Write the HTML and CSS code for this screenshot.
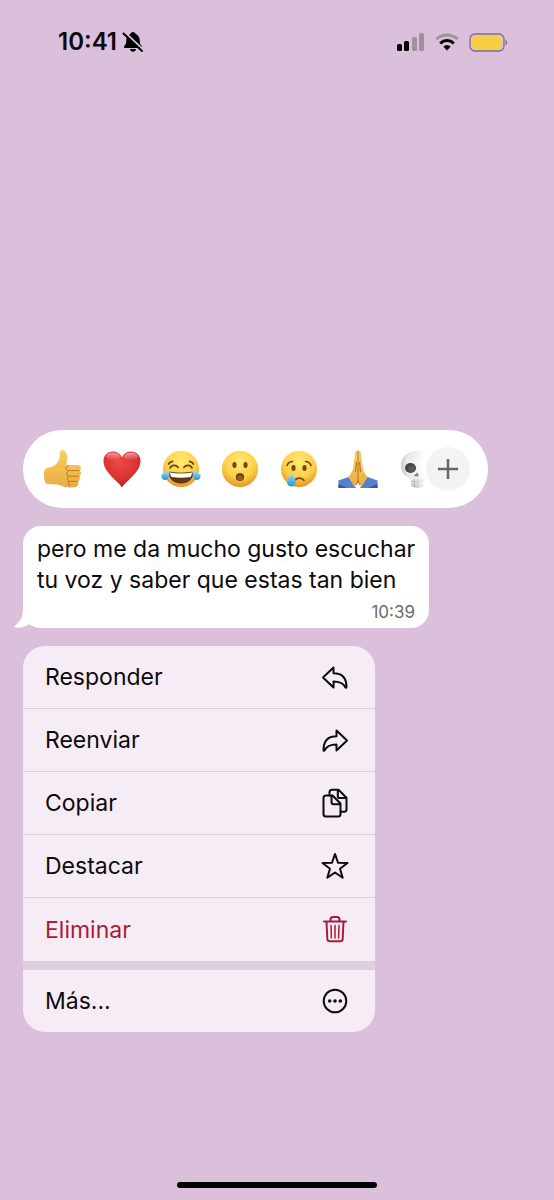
FILE: index.html
```html
<!DOCTYPE html>
<html lang="es">
<head>
  <meta charset="UTF-8">
  <meta name="viewport" content="width=device-width, initial-scale=1.0">
  <title>Chat</title>
  <link rel="stylesheet" href="styles.css">
</head>
<body>
  <header class="status-bar">
    <div class="clock">
      <span>10:41</span>
      <svg width="22" height="22" viewBox="0 0 22 22">
        <path d="M11 1c-1.600 0-2.400 1-2.600 2.100C5.500 4 4.300 6.500 4.300 9.500c0 3-.8 4.300-2 5.500-.7.800-.4 2 .7 2h16c1.100 0 1.400-1.200.7-2-1.200-1.200-2-2.500-2-5.500 0-3-1.200-5.500-4.100-6.400C13.400 2 12.600 1 11 1z"/>
        <path d="M8 18h6c-.2 1.700-1.300 2.700-3 2.700S8.200 19.700 8 18z"/>
        <path class="bell-gap" d="M2 .500l19 18"/>
        <path class="bell-slash" d="M1.500 2.500l18.500 17.500"/>
      </svg>
    </div>
    <div class="indicators">
      <svg width="29" height="18" viewBox="0 0 29 18">
        <rect x="1" y="11" width="5" height="7" rx="1.500"/>
        <rect x="8" y="8" width="5" height="10" rx="1.500"/>
        <g opacity=".25">
          <rect x="16" y="4" width="5" height="14" rx="1.500"/>
          <rect x="23" y="0" width="5" height="18" rx="1.500"/>
        </g>
      </svg>
      <svg width="24" height="18" viewBox="0 0 24 18">
        <path class="wifi-line" opacity=".25" d="M1.500 6.200C7.500.700 16.500.700 22.500 6.200"/>
        <path class="wifi-line" d="M5.200 10.300c4-3.700 9.600-3.700 13.600 0"/>
        <path d="M12 17.500l-3.600-3.800c2-1.900 5.200-1.900 7.200 0z"/>
      </svg>
      <svg width="40" height="19" viewBox="0 0 40 19">
        <rect x="1" y="1" width="34" height="17" rx="5" fill="none" stroke="#84698d" stroke-width="1.300"/>
        <rect x="3" y="3" width="30" height="13" rx="3.500" fill="#f6cf46"/>
        <path d="M36.500 6.500c2 .7 2 5.300 0 6z" fill="#84698d"/>
      </svg>
    </div>
  </header>

  <main class="overlay">
    <div class="reactions">
      <div class="reaction-list">
        <button class="reaction" aria-label="Me gusta">
          <svg viewBox="0 0 40 40">
            <defs>
              <linearGradient id="skin" x1="0" y1="0" x2="0" y2="1">
                <stop offset="0" stop-color="#fbcf62"/>
                <stop offset="1" stop-color="#e9ac42"/>
              </linearGradient>
              <radialGradient id="face" cx=".5" cy=".3" r=".72">
                <stop offset="0" stop-color="#ffec72"/>
                <stop offset=".6" stop-color="#fdcf49"/>
                <stop offset="1" stop-color="#e58f25"/>
              </radialGradient>
              <linearGradient id="tear" x1="0" y1="0" x2="0" y2="1">
                <stop offset="0" stop-color="#a8e6fb"/>
                <stop offset="1" stop-color="#2593d6"/>
              </linearGradient>
            </defs>
            <path fill="url(#skin)" d="M2 20c3-2 7-1.500 9.500-3.500 3-2.600 5.500-6 5.300-11.500-.1-2.500.7-4 2.400-4 3 0 5 3.500 5 7.500 0 3-.9 5.500-.7 7.500h11.500c3 0 4 4 1.600 5.600 2 1.500 1.800 4.600-.3 5.600 1.300 1.600.8 4.300-1.300 5.200 1 2.600-.6 5.600-3.600 5.900-5 .5-11-.1-15-2.300-4-1.500-9 .2-13.400-1.400C.500 30.500.500 22.500 2 20z"/>
            <path fill="none" stroke="#bd7a1e" stroke-width="1" stroke-linecap="round" d="M36 21.600H25.500M35.800 27.200H25.500M34.500 32.400H26M25.500 16.500c-2 .6-2.900 2.500-2 4.400M25.500 21.600c-2.200.9-2.400 4.200 0 5.600-1.700 1.300-1.500 4.200.5 5.200-1 1.500-.7 3.500.7 4.800"/>
            <path fill="none" stroke="#f0b13d" stroke-width="1" d="M13 18c4 0 7-3 8-6"/>
          </svg>
        </button>
        <button class="reaction" aria-label="Me encanta">
          <svg viewBox="0 0 40 40">
            <defs>
              <radialGradient id="heart" cx=".45" cy=".3" r=".75">
                <stop offset="0" stop-color="#ec4a43"/>
                <stop offset=".65" stop-color="#d9302f"/>
                <stop offset="1" stop-color="#ab1c20"/>
              </radialGradient>
              <linearGradient id="shine" x1="0" y1="0" x2="0" y2="1">
                <stop offset="0" stop-color="#fff" stop-opacity=".5"/>
                <stop offset="1" stop-color="#fff" stop-opacity="0"/>
              </linearGradient>
            </defs>
            <path fill="url(#heart)" d="M20 38.500C17 33 2 24 1.500 12.500 1.300 6.500 5.500 2.500 11 2.500c4.500 0 7.500 2.500 9 6 1.500-3.500 4.500-6 9-6 5.500 0 9.700 4 9.500 10C38 24 23 33 20 38.500z"/>
            <ellipse cx="11" cy="7.500" rx="7" ry="4" fill="url(#shine)"/>
            <ellipse cx="29" cy="7.500" rx="7" ry="4" fill="url(#shine)"/>
          </svg>
        </button>
        <button class="reaction" aria-label="Me divierte">
          <svg viewBox="0 0 40 40">
            <circle cx="20" cy="20" r="18" fill="url(#face)"/>
            <path fill="none" stroke="#6b3f10" stroke-width="1.700" stroke-linecap="round" d="M9 19c1.500-3.500 6-3.500 8.200-.6M22.800 18.400c2.200-2.900 6.700-2.900 8.200.6M7.500 15c1-1.500 2.500-2.400 4-2.700M32.500 15c-1-1.500-2.500-2.400-4-2.700"/>
            <path fill="#613613" d="M7.500 22.500c8 1.500 17 1.500 25 0C32.500 30.500 27 34.500 20 34.500S7.500 30.500 7.500 22.500z"/>
            <path fill="#fff" d="M9 23.500c7 1.200 15 1.200 22 0-.2 2-.8 3.500-1.500 4.500-6 .9-13 .9-19 0C9.800 27 9.200 25.500 9 23.500z"/>
            <path fill="url(#tear)" d="M9 21.500C8 26 8.500 30.800 4.500 31c-4 .2-5.500-4.500-2.500-6.500 2-1.300 5-1.500 7-3zM31 21.500c1 4.500.5 9.300 4.500 9.500 4 .2 5.500-4.500 2.500-6.500-2-1.300-5-1.500-7-3z"/>
          </svg>
        </button>
        <button class="reaction" aria-label="Me asombra">
          <svg viewBox="0 0 40 40">
            <circle cx="20" cy="20" r="18" fill="url(#face)"/>
            <ellipse cx="14.500" cy="16" rx="2.100" ry="3" fill="#754517"/>
            <ellipse cx="25.500" cy="16" rx="2.100" ry="3" fill="#754517"/>
            <ellipse cx="20" cy="28" rx="4.200" ry="4" fill="#754517"/>
            <ellipse cx="20" cy="29" rx="2.700" ry="2.200" fill="#936023"/>
          </svg>
        </button>
        <button class="reaction" aria-label="Me entristece">
          <svg viewBox="0 0 40 40">
            <circle cx="20" cy="20" r="18" fill="url(#face)"/>
            <ellipse cx="14.500" cy="19" rx="2.100" ry="3" fill="#754517"/>
            <ellipse cx="25.500" cy="19" rx="2.100" ry="3" fill="#754517"/>
            <path fill="none" stroke="#754517" stroke-width="1.600" stroke-linecap="round" d="M8 16.500c1-2.500 3-4 5.500-4M32 16.500c-1-2.500-3-4-5.500-4M16 31.500c1.500-3 7-3.300 9 0"/>
            <path fill="url(#tear)" d="M12.500 23.500c1.500 3.500 4.500 6.500 4.300 9.500-.2 3-2.300 4.600-4.600 4.600S8 35.800 8 33c0-3 3.200-5.500 4.500-9.500z"/>
          </svg>
        </button>
        <button class="reaction" aria-label="Gracias">
          <svg viewBox="0 0 40 40">
            <path fill="#5580cb" d="M.5 31.500l10-3.500 7.500 11H.5zM39.500 31.500l-10-3.500-7.500 11h17.500z"/>
            <path fill="#35589f" d="M.5 35l9 4H.5zM39.500 35l-9 4h9z"/>
            <path fill="url(#skin)" d="M19.800 1.500c-2 0-2.500.8-2.700 2.500l-1.600 13c-.6 5-2 7.500-5 10.500l5.500 10c2.800-1.200 4-4 4-7.500zM20.200 1.500c2 0 2.500.8 2.700 2.500l1.600 13c.6 5 2 7.500 5 10.500l-5.500 10c-2.800-1.200-4-4-4-7.500z"/>
            <path fill="none" stroke="#b8771f" stroke-width="1.100" d="M20 2v28c0 2.500-.8 4.500-2 6M20 30c0 2.500.8 4.500 2 6M18.500 13l-1 10M21.500 13l1 10"/>
          </svg>
        </button>
        <button class="reaction" aria-label="Calavera">
          <svg viewBox="0 0 40 40">
            <defs>
              <radialGradient id="bone" cx=".6" cy=".4" r=".7">
                <stop offset="0" stop-color="#fafafa"/>
                <stop offset=".65" stop-color="#e9ebed"/>
                <stop offset="1" stop-color="#a9b4b8"/>
              </radialGradient>
            </defs>
            <path fill="url(#bone)" d="M22 1.500C11 1.500 4 8 4 16.500c0 3.500 1 6 2.500 8.500 1.500 2.500 5.500 2.500 7 5 1 2 0 4.500 1 7 1.400 2.400 11 2.400 12.400 0 1-2.500 1.500-4.500 3.100-7 3-3 8-5 8-13.500C38 8 32 1.500 22 1.500z"/>
            <ellipse cx="13.500" cy="19" rx="5.500" ry="5" fill="#454547"/>
            <ellipse cx="14.500" cy="20" rx="3.500" ry="3" fill="#58585b"/>
            <path fill="#77797c" d="M20.500 23.500l-3.500 3.300c1.500.8 4 .8 5 0z"/>
            <path fill="none" stroke="#aeb0b2" stroke-width=".8" d="M14 32c4 1 9 1 13 0M17.500 30v8M21 30v8.500M24.500 30v8"/>
          </svg>
        </button>
      </div>
      <button class="more-reactions" aria-label="Más reacciones">
        <svg width="22" height="22" viewBox="0 0 22 22">
          <path d="M11 1v20M1 11h20"/>
        </svg>
      </button>
    </div>

    <div class="bubble">
      <svg class="tail" width="24" height="20" viewBox="0 0 24 20">
        <path d="M9 0c0 9-2.500 13.500-8.300 18-.6.600-.2 1.500.5 1.500C7 20 11 19 15 16.500L24 20V0z"/>
      </svg>
      <p>pero me da mucho gusto escuchar tu voz y saber que estas tan bien</p>
      <time datetime="10:39">10:39</time>
    </div>

    <div class="menu">
      <button class="menu-item">
        <span>Responder</span>
        <svg viewBox="0 0 32 32">
          <path d="M14.500 6.500L4 16.500l10.500 10v-6c6 0 9.800 1.200 12 6 .3.500 1 .4 1-.3 0-9-4-14-13-14z"/>
        </svg>
      </button>
      <button class="menu-item">
        <span>Reenviar</span>
        <svg viewBox="0 0 32 32">
          <path d="M17.500 6.500L28 16.500l-10.500 10v-6c-6 0-9.800 1.200-12 6-.3.500-1 .4-1-.3 0-9 4-14 13-14z"/>
        </svg>
      </button>
      <button class="menu-item">
        <span>Copiar</span>
        <svg viewBox="0 0 32 32">
          <path d="M7 8.500h6.500l8 8V27c0 1.700-.8 2.500-2.500 2.500H7c-1.700 0-2.500-.8-2.500-2.500V11c0-1.700.8-2.500 2.500-2.500zM12.500 8.500v6.500c0 1.500.7 2.200 2.200 2.200h6.800"/>
          <path d="M10.500 8.500V5.300c0-1.700.8-2.500 2.500-2.500h6.500l8 8v11.400c0 1.700-.8 2.500-2.500 2.500h-3.500M18.800 2.800v6.500c0 1.200.6 1.800 1.800 1.800h6.900"/>
        </svg>
      </button>
      <button class="menu-item">
        <span>Destacar</span>
        <svg viewBox="0 0 32 32">
          <path d="M16 4l3.100 8.800 9.400.2-7.500 5.700 2.700 9.100L16 22.500l-7.700 5.300 2.700-9.100L3.500 13l9.400-.2z"/>
        </svg>
      </button>
      <button class="menu-item danger">
        <span>Eliminar</span>
        <svg viewBox="0 0 32 32">
          <path d="M5 7.500h22M7.500 7.500l.8 17.500c.1 1.500.9 2.300 2.400 2.300h10.600c1.500 0 2.300-.8 2.400-2.300l.8-17.500M11.500 7.500v-2c0-1.600.9-2.500 2.500-2.500h4c1.600 0 2.500.9 2.500 2.500v2"/>
          <path class="thin" d="M12 11.500l.4 12.500M16 11.500V24M20 11.500L19.600 24"/>
        </svg>
      </button>
      <button class="menu-item">
        <span>Más...</span>
        <svg viewBox="0 0 32 32">
          <circle cx="16" cy="16" r="11.300"/>
          <g class="dots">
            <circle cx="10.700" cy="16" r="1.800"/>
            <circle cx="16" cy="16" r="1.800"/>
            <circle cx="21.300" cy="16" r="1.800"/>
          </g>
        </svg>
      </button>
    </div>
  </main>

  <div class="home-indicator"></div>
</body>
</html>
```
FILE: styles.css
```css
* {
  margin: 0;
  padding: 0;
  box-sizing: border-box;
}

body {
  display: flex;
  flex-direction: column;
  min-height: 100vh;
  font-family: Inter, "Liberation Sans", sans-serif;
  background-color: #dac0da;
  color: #0c0a0d;
}

button {
  border: none;
  background: none;
  font: inherit;
  color: inherit;
  cursor: pointer;
}

svg {
  display: block;
  flex-shrink: 0;
}

/* Status bar */
.status-bar {
  display: flex;
  justify-content: space-between;
  align-items: center;
  padding: 27px 45px 0 58px;
}

.clock {
  display: flex;
  align-items: center;
  gap: 5px;
  font-size: 24px;
  font-weight: 600;
  line-height: 30px;
}

.bell-gap {
  stroke: #dac0da;
  stroke-width: 2;
}

.bell-slash {
  stroke: #000;
  stroke-width: 2;
  stroke-linecap: round;
}

.indicators {
  display: flex;
  align-items: center;
  gap: 10px;
}

.wifi-line {
  fill: none;
  stroke: #000;
  stroke-width: 3;
}

/* Message and its context menu */
.overlay {
  flex: 1;
  display: flex;
  flex-direction: column;
  justify-content: flex-end;
  gap: 18px;
  padding: 0 23px 150px;
}

.reactions {
  display: flex;
  align-items: center;
  width: 100%;
  max-width: 465px;
  height: 78px;
  padding: 0 18px 0 20px;
  border-radius: 39px;
  background-color: #fff;
}

.reaction-list {
  flex: 1;
  display: flex;
  gap: 19px;
  min-width: 0;
  overflow: hidden;
  mask-image: linear-gradient(to left, transparent 0, #000 10px);
}

.reaction {
  flex: 0 0 40px;
  height: 40px;
}

.more-reactions {
  display: flex;
  flex-shrink: 0;
  align-items: center;
  justify-content: center;
  width: 44px;
  height: 44px;
  border-radius: 50%;
  background-color: #f3f3f3;
}

.more-reactions path {
  stroke: #656565;
  stroke-width: 2.5;
}

.bubble {
  position: relative;
  width: 100%;
  max-width: 406px;
  padding: 8px 8px 0 14px;
  border-radius: 18px;
  background-color: #fff;
}

.bubble p {
  font-size: 23px;
  line-height: 31px;
}

.bubble time {
  display: block;
  padding-right: 6px;
  font-size: 17px;
  line-height: 32px;
  text-align: right;
  color: #6b6b6b;
}

.tail {
  position: absolute;
  left: -9px;
  bottom: 0;
  fill: #fff;
}

.menu {
  width: 100%;
  max-width: 352px;
  border-radius: 22px;
  overflow: hidden;
  background-color: #f6ecf6;
}

.menu-item {
  display: flex;
  align-items: center;
  justify-content: space-between;
  width: 100%;
  height: 63px;
  padding: 0 24px 0 22px;
  border-bottom: 1px solid #dccfdc;
  font-size: 23px;
  text-align: left;
}

.menu-item svg {
  width: 32px;
  height: 32px;
  fill: none;
  stroke: currentColor;
  stroke-width: 2;
  stroke-linecap: round;
  stroke-linejoin: round;
}

.menu-item .thin {
  stroke-width: 1.5;
}

.menu-item .dots {
  fill: currentColor;
  stroke: none;
}

.menu-item.danger {
  height: 72px;
  border-bottom: 9px solid #ddd0dc;
  color: #ab1a38;
}

.menu-item:last-child {
  height: 62px;
  border-bottom: none;
}

.home-indicator {
  width: 36%;
  height: 6px;
  margin: 0 auto 12px;
  border-radius: 3px;
  background-color: #000;
}
```
